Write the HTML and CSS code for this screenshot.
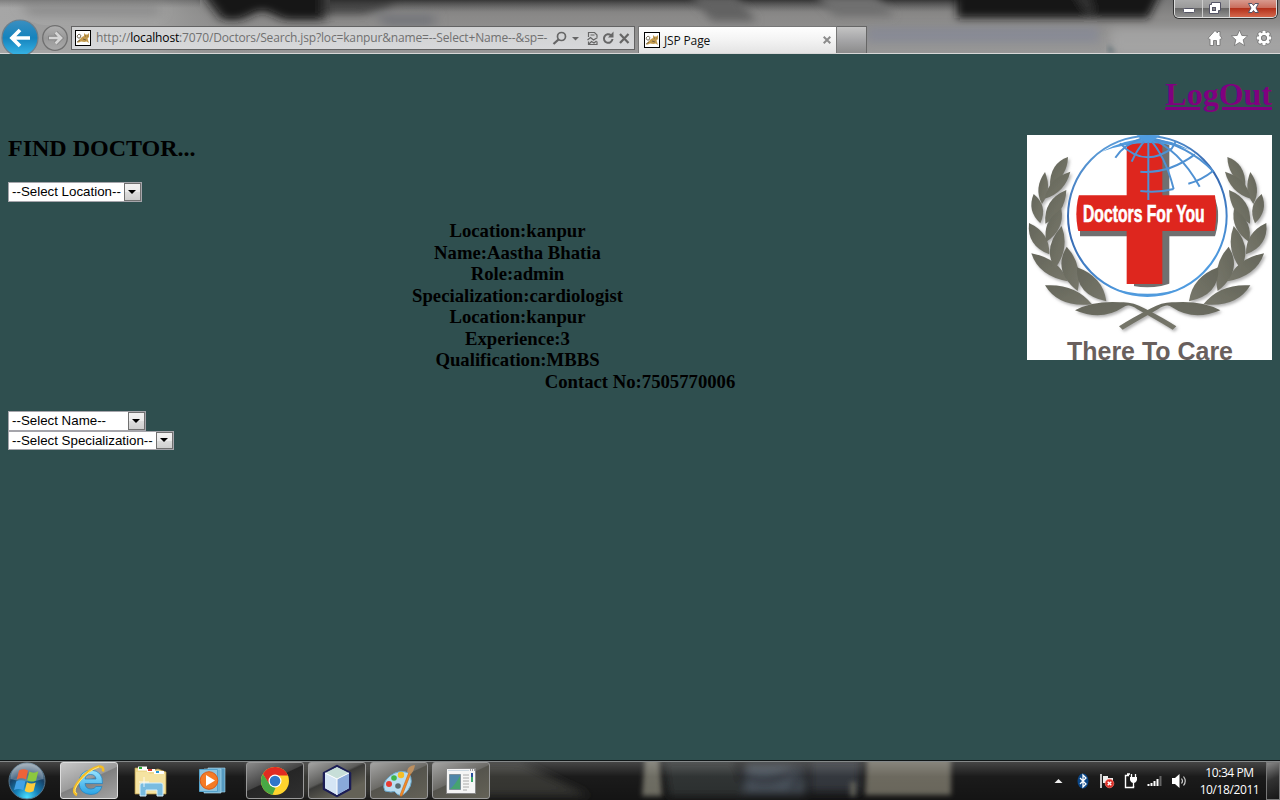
FILE: index.html
```html
<!DOCTYPE html>
<html lang="en">
<head>
<meta charset="utf-8">
<title>JSP Page</title>
<link rel="stylesheet" href="styles.css">
</head>
<body>
<svg class="defs" width="0" height="0" aria-hidden="true">
  <defs>
    <symbol id="cat" viewBox="0 0 16 16">
      <rect x=".5" y=".5" width="15" height="15" fill="#fff" stroke="#000"/>
      <path d="M2 12.500l2-2.500 3-3 2-1V3l1.500 1.500h2L14 3v4l-1.500 1.500L14 13l-2.500-1.500-2 .5L6 11.500l-2 1z" fill="#c39a4c"/>
      <path d="M2 6l2-2 2 1.500L5 8 3 8zM2 12l3-2M10 6h1M12.500 6h.5M8 9l3 1" fill="none" stroke="#5f563f" stroke-width=".8"/>
    </symbol>
  </defs>
</svg>
<header class="chrome">
  <svg class="glass" width="1280" height="54" viewBox="0 0 1280 54" preserveAspectRatio="none">
    <defs>
      <linearGradient id="gt" x1="0" y1="0" x2="0" y2="1"><stop offset="0" stop-color="#777"/><stop offset=".3" stop-color="#8a8988"/><stop offset="1" stop-color="#989898"/></linearGradient>
      <linearGradient id="gl" x1="0" y1="0" x2="1" y2="0"><stop offset="0" stop-color="#a6a6a6"/><stop offset=".6" stop-color="#a0a09f"/><stop offset="1" stop-color="#888" stop-opacity="0"/></linearGradient>
      <linearGradient id="gd" x1="0" y1="0" x2="0" y2="1"><stop offset="0" stop-color="#2c2c2c" stop-opacity=".85"/><stop offset="1" stop-color="#555" stop-opacity="0"/></linearGradient>
      <linearGradient id="gs" x1="0" y1="0" x2="0" y2="1"><stop offset="0" stop-color="#444" stop-opacity=".4"/><stop offset="1" stop-color="#555" stop-opacity="0"/></linearGradient>
      <filter id="b4" x="-20%" y="-80%" width="140%" height="260%"><feGaussianBlur stdDeviation="6 4"/></filter>
      <filter id="b3" x="-20%" y="-80%" width="140%" height="260%"><feGaussianBlur stdDeviation="4"/></filter>
      <filter id="b2" x="-20%" y="-60%" width="140%" height="220%"><feGaussianBlur stdDeviation="2.500"/></filter>
    </defs>
    <rect width="1280" height="54" fill="url(#gt)"/>
    <rect width="260" height="54" fill="url(#gl)"/>
    <g filter="url(#b4)">
      <path d="M198-12H325V20H285L262 10L240 20H222z" fill="#161616"/>
      <path d="M325-12H395L390 6L365 14H325z" fill="#454545"/>
      <path d="M375 14h60v12h-50z" fill="#74767a"/>
      <path d="M20 4h140v12H30z" fill="#8e8e8e"/>
    </g>
    <rect x="330" width="640" height="12" fill="url(#gd)"/>
    <rect width="200" height="8" fill="url(#gs)"/>
    <g filter="url(#b3)">
      <path d="M690-4h45l22 25h-45z" fill="#626262"/>
      <path d="M815-4h60l20 20h-60z" fill="#707070"/>
      <path d="M957-12h206l-15 30H957z" fill="#141414"/>
      <path d="M1070-12l16 0 10 26h-10z" fill="#303030"/>
    </g>
    <rect x="868" y="28" width="230" height="14" fill="#80859a" opacity=".55" filter="url(#b3)"/>
    <rect x="1110" y="28" width="190" height="26" fill="#adadad" opacity=".6" filter="url(#b4)"/>
    <path d="M1108 44l8 9h-8z" fill="#66757a" filter="url(#b2)"/>
  </svg>
  <div class="titlebar">
    <div class="winctl">
      <span class="wbtn w1"><svg width="29" height="17"><rect x="8.500" y="8.500" width="11" height="4" rx="1" fill="#fff" stroke="#556"/></svg></span>
      <span class="wbtn w2"><svg width="27" height="17"><path d="M8.500 2.500h9v8h-2v3h-9v-9h2z" fill="#fff" stroke="#556"/><rect x="9.500" y="7.500" width="3" height="3" fill="#888" stroke="#556"/></svg></span>
      <span class="wbtn w3"><svg width="46" height="17"><path d="M18.500 3.500h3.500l1.500 2 1.500-2h3.500l-2.500 4.500 2.500 4.500H25L23.500 10.500l-1.500 2h-3.500l2.500-4.500z" fill="#fff" stroke="#545466"/></svg></span>
    </div>
  </div>
  <div class="navrow">
    <svg class="arrows" width="72" height="35" viewBox="0 19 72 35">
      <defs>
        <linearGradient id="bk" x1="0" y1="0" x2="0" y2="1"><stop offset="0" stop-color="#3b8fc0"/><stop offset=".5" stop-color="#1583bd"/><stop offset="1" stop-color="#39b7e8"/></linearGradient>
        <linearGradient id="fw" x1="0" y1="0" x2="0" y2="1"><stop offset="0" stop-color="#b0b0b0"/><stop offset=".5" stop-color="#999"/><stop offset="1" stop-color="#aaa"/></linearGradient>
      </defs>
      <path d="M28 20q10 6 22 5v25H24z" fill="#999" opacity=".6"/>
      <circle cx="20" cy="38" r="18" fill="url(#bk)" stroke="#6f7f8a" stroke-width="1.200"/>
      <path d="M30 38H12M20 30L12 38L20 46" fill="none" stroke="#fff" stroke-width="3.700"/>
      <circle cx="55" cy="38" r="12.300" fill="url(#fw)" stroke="#707070" stroke-width="1.300"/>
      <path d="M48 38h12M55.500 32.500L61 38L55.500 43.500" fill="none" stroke="#858585" stroke-width="4.400"/>
      <path d="M49 38h11M55.500 32.500L61 38L55.500 43.500" fill="none" stroke="#d5d5d5" stroke-width="2.700"/>
    </svg>
    <div class="address">
      <svg width="16" height="16"><use href="#cat"/></svg>
      <span class="url">http://<b>localhost</b>:7070/Doctors/Search.jsp?loc=kanpur&amp;name=--Select+Name--&amp;sp=-</span>
      <svg class="tools" width="80" height="18" viewBox="551 29 80 18" fill="none" stroke="#666">
        <circle cx="560.500" cy="36.500" r="4" stroke-width="1.700"/><path d="M557.500 39.500L552.500 44" stroke-width="2.300"/>
        <path d="M571 37h7l-3.500 3.500z" fill="#666" stroke="none"/>
        <path d="M587.500 37v-4.500h6l2.500 2.500v2M587.500 41.500v3h8.500v-3M586.500 40l3-2.500 3 2.500 4-2.500M588 44l2.500-2.500 2.500 1.500 2.500-2M589.500 35h4" stroke-width="1.200"/>
        <path d="M610 35.200a4.300 4.300 0 1 0 1.500 3.800" stroke-width="2"/><path d="M612.500 31.500v6h-5.500z" fill="#666" stroke="none"/>
        <path d="M619 34l8.500 9M627.500 34l-8.500 9" stroke-width="2.200"/>
      </svg>
    </div>
    <div class="tab">
      <svg width="16" height="16"><use href="#cat"/></svg>
      <span class="tabname">JSP Page</span>
      <svg width="8" height="8"><path d="M.7.7l6.600 6.600M7.300.7L.7 7.300" stroke="#8c8c8c" stroke-width="2"/></svg>
    </div>
    <div class="newtab"></div>
    <svg class="icons" width="66" height="18" viewBox="1207 29 66 18" fill="#fff" stroke="#777" stroke-width=".9">
      <path d="M1215 30.500l2.500 2.500v-1.500h2.500v4l2 2.800-1 .9h-1V45.500h-3.500v-5h-3v5H1210v-6.300h-1l-1-.9z"/>
      <path d="M1239.500 30l2.300 5.400 5.900.5-4.500 3.900 1.400 5.900-5.100-3.200-5.100 3.200 1.400-5.900-4.500-3.900 5.900-.5z"/>
      <g><path d="M1264 30.200v15.600M1256.200 38h15.600M1258.500 32.500l11 11M1269.500 32.500l-11 11" stroke="#777" stroke-width="4.400"/><path d="M1264 30.800v14.400M1256.800 38h14.400M1259 33l10 10M1269 33l-10 10" stroke="#fff" stroke-width="3"/><circle cx="1264" cy="38" r="4.200" fill="#999" stroke="#fff" stroke-width="2.700"/><circle cx="1264" cy="38" r="2.600" fill="#aaa" stroke="#777"/></g>
    </svg>
  </div>
</header>

<main class="page">
  <h1><a href="#">LogOut</a></h1>
  <svg class="logo" width="245" height="225" viewBox="51 195 735 675">
    <defs>
      <linearGradient id="leaf" x1="0" y1="0" x2="1" y2="1"><stop offset="0" stop-color="#65665a"/><stop offset="1" stop-color="#77776b"/></linearGradient>
      <linearGradient id="ring" x1="0" y1="0" x2=".4" y2="1"><stop offset="0" stop-color="#67aee6"/><stop offset=".5" stop-color="#3565ad"/><stop offset="1" stop-color="#4f9be0"/></linearGradient>
      <clipPath id="globe"><ellipse cx="412" cy="433" rx="213" ry="219"/></clipPath>
      <filter id="sh" x="-10%" y="-10%" width="120%" height="120%"><feDropShadow dx="5" dy="6" stdDeviation="4" flood-color="#888" flood-opacity=".65"/></filter>
      <g id="branch" fill="url(#leaf)">
        <path d="M174 261Q118 280 120 349Q172 320 174 261z"/>
        <path d="M105 306Q70 355 96 402Q127 360 105 306z"/>
        <path d="M181 305Q114 325 104 386Q165 368 181 305z"/>
        <path d="M71 372Q50 422 91 460Q115 408 71 372z"/>
        <path d="M169 360Q100 388 106 461Q166 430 169 360z"/>
        <path d="M57 459Q50 528 118 553Q120 488 57 459z"/>
        <path d="M154 416Q95 455 109 515Q165 478 154 416z"/>
        <path d="M64 550Q86 618 173 634Q148 566 64 550z"/>
        <path d="M155 468Q96 534 135 596Q180 535 155 468z"/>
        <path d="M170 530Q126 602 203 663Q220 584 170 530z"/>
        <path d="M105 646Q146 714 246 703Q196 640 105 646z"/>
        <path d="M201 592Q196 675 289 694Q279 620 201 592z"/>
        <path d="M195 721Q250 692 330 697Q365 693 403 715Q460 744 499 769L488 779Q430 745 382 718Q355 699 340 712Q275 755 195 721z"/>
      </g>
    </defs>
    <rect x="51" y="195" width="735" height="675" fill="#fff"/>
    <g filter="url(#sh)"><use href="#branch"/><use href="#branch" transform="translate(826 0) scale(-1 1)"/></g>
    <g clip-path="url(#globe)">
      <path d="M370 206H478V378H612Q636 435 617 499H478V660H372V499H210V395H370z" fill="#707070"/>
      <path d="M350 206H457V376H615Q623 430 614 483H457V642H350V483H190V376H350z" fill="#de261e"/>
    </g>
    <ellipse cx="412" cy="438" rx="238" ry="240" fill="none" stroke="url(#ring)" stroke-width="6"/>
    <path d="M300 651Q412 705 525 651Q412 692 300 651zM275 245Q412 170 540 240Q412 196 275 245z" fill="#519bdd"/>
    <g fill="none" stroke="#4f91d3" stroke-width="6">
      <path d="M415 200V390M415 203Q465 255 491 357M415 203Q505 235 569 350M415 203Q535 225 610 304M410 205Q380 240 365 275M400 203Q340 225 316 263M330 220Q402 295 485 236L497 215M391 305Q475 312 555 253M391 363Q440 370 491 357M535 341Q575 330 610 302"/>
    </g>
    <path d="M380 196H450L425 216H403z" fill="#4f9ce0"/>
    <text x="219" y="457" font-family="Liberation Sans, sans-serif" font-weight="700" font-size="73" textLength="365" lengthAdjust="spacingAndGlyphs" fill="#fff" stroke="#fff" stroke-width="2">Doctors For You</text>
    <text x="171" y="869" font-family="Liberation Sans, sans-serif" font-weight="700" font-size="75" textLength="498" lengthAdjust="spacingAndGlyphs" fill="#695f5d">There To Care</text>
  </svg>
  <h2>FIND DOCTOR...</h2>
  <div class="select loc"><span>--Select Location--</span><i></i></div>
  <h3>Location:kanpur<br>Name:Aastha Bhatia<br>Role:admin<br>Specialization:cardiologist<br>Location:kanpur<br>Experience:3<br>Qualification:MBBS<br>Contact No:7505770006</h3>
  <div class="select name"><span>--Select Name--</span><i></i></div>
  <div class="select spec"><span>--Select Specialization--</span><i></i></div>
</main>

<footer class="taskbar">
  <svg class="glass" width="1280" height="40" viewBox="0 0 1280 40">
    <defs><linearGradient id="tg" x1="0" y1="0" x2="0" y2="1"><stop offset="0" stop-color="#fff" stop-opacity=".22"/><stop offset=".4" stop-color="#fff" stop-opacity=".03"/><stop offset="1" stop-color="#fff" stop-opacity="0"/></linearGradient></defs>
    <rect width="1280" height="40" fill="#141414"/>
    <g filter="url(#b3)">
      <path d="M250 2h270l70 34H250z" fill="#30302e"/>
      <path d="M664 0h70l10 36h-75z" fill="#2b2d2e"/>
      <path d="M745 4h60v30h-62z" fill="#454d56"/>
      <path d="M740 12q25 20 60-6M792 30l12-22" stroke="#252a30" stroke-width="6" fill="none"/>
      <path d="M810 0h50v32h-50z" fill="#2d3137"/>
    </g>
    <g filter="url(#b2)">
      <path d="M645-4h14l3 40h-20z" fill="#6b695f"/>
      <path d="M850 22h6v14h-6z" fill="#5c5b54"/>
      <path d="M867-4h84v39h-86z" fill="#68655a"/>
    </g>
    <rect y="1" width="1280" height="39" fill="url(#tg)"/>
    <path d="M0 .5h1280" stroke="#101617"/><path d="M0 1.500h1280" stroke="#85898a"/>
  </svg>
  <svg class="start" width="38" height="38" viewBox="0 0 38 38">
    <defs><radialGradient id="orb" cx=".5" cy=".95" r=".9"><stop offset="0" stop-color="#4be0ff"/><stop offset=".35" stop-color="#1683bb"/><stop offset=".7" stop-color="#174166"/><stop offset="1" stop-color="#8495a3"/></radialGradient></defs>
    <circle cx="19" cy="19" r="18" fill="url(#orb)" stroke="#55758b"/>
    <path d="M2.500 17a16.500 16.500 0 0 1 33 0Q19 22 2.500 17z" fill="#fff" opacity=".25"/>
    <path d="M11 8.500q4.500-2.500 9 0l-2 9q-4.500-2.400-9.300 0z" fill="#ee6338"/>
    <path d="M21.300 9.500q4.500 2.400 9-.3l-2.300 9.200q-4.500 2.500-8.800-.2z" fill="#8cc83f"/>
    <path d="M8.300 19.300q4.500-2.200 9.200 0l-2.200 8.900q-4.700-2.400-9.300-.2z" fill="#42a2e6"/>
    <path d="M18.900 20.200q4.500 2.500 8.800.2l-2.200 8.900q-4.500 2.400-8.800-.2z" fill="#fccb3c"/>
  </svg>
  <nav class="apps">
    <span class="app active"><svg width="36" height="34" viewBox="0 0 36 34"><defs><linearGradient id="ie" x1="0" y1="0" x2="0" y2="1"><stop offset="0" stop-color="#99e4ff"/><stop offset="1" stop-color="#2ba3e4"/></linearGradient></defs><path d="M31.500 19.500H14q.5 5.500 6 5.500 3.500 0 5-2.500h6Q28.500 30.500 20 30.500 8.500 30 8 19 8 7 20 6q12 1 11.500 13.500zM14 15h11q-.5-4.500-5.500-4.500T14 15z" fill="url(#ie)" stroke="#2380be" stroke-width=".7"/><path d="M6 31Q-.5 28 8 17 17 5 28 2.500q5-.5 4 5" fill="none" stroke="#f4bd22" stroke-width="2.600"/><path d="M5.500 29.500Q1 27 9 17 18 6 28 3" fill="none" stroke="#ffe683" stroke-width="1"/></svg></span>
    <span class="app flat"><svg width="34" height="32" viewBox="0 0 34 32"><path d="M1 3h11l2 3 10-2 8 3v22H1z" fill="#efd98c" stroke="#b79b52" stroke-width=".7"/><path d="M4 1.500h9v4H4zM13 4h8v3h-8zM20 6h10v3H20z" fill="#fff"/><path d="M5 2h3v2H5z" fill="#26ad34"/><path d="M14 4h4v2h-4z" fill="#d53c30"/><path d="M22 6h3v2h-3z" fill="#2798d4"/><path d="M2 7h12l2 2h15v19H2z" fill="#f5e3a1"/><path d="M6 31V20q0-2 2-2h19q2 0 2 2v11h-6v-6H12v6z" fill="#79bce0" stroke="#d6effb"/><path d="M10 12v10M5 17h10" stroke="#fff" opacity=".8"/></svg></span>
    <span class="app flat wmp"><svg width="28" height="28" viewBox="0 0 28 28"><path d="M10 1h17v24H10z" fill="#5599bf" stroke="#a8d8ee" stroke-width=".6"/><path d="M6 2h17v24H6z" fill="#71b4d5" stroke="#b9e1f2" stroke-width=".6"/><path d="M1.500 2.500h18v22h-18z" fill="#8fc4dd" stroke="#54a2cb"/><circle cx="11" cy="13.500" r="8.800" fill="#f47b25" stroke="#dc5b15"/><path d="M8 8l9 5.500L8 19z" fill="#fff"/></svg></span>
    <span class="app"><svg width="30" height="30" viewBox="0 0 30 30"><circle cx="15" cy="15" r="14" fill="#ffd42d"/><path d="M2.900 8A14 14 0 0 1 28 9.500H15L9 18z" fill="#e12b22"/><path d="M2.900 8L10 19l5.500 3-3 6.800A14 14 0 0 1 2.900 8z" fill="#48a845"/><circle cx="15" cy="15" r="6.500" fill="#fff"/><circle cx="15" cy="15" r="5.300" fill="#2f76c9"/></svg></span>
    <span class="app warm first"><svg width="32" height="34" viewBox="0 0 32 34"><path d="M16 2l13 7v16l-13 7-13-7V9z" fill="#eef5fb" stroke="#1b1d56" stroke-width="2.500" stroke-linejoin="round"/><path d="M16 3l12 6-12 6L4 9z" fill="#c7ded8"/><path d="M16 15l12-6v15l-12 7z" fill="#89a9d9"/><path d="M4 9l12 6v16L4 24z" fill="#d5e5f5"/><path d="M4 9l12 6 12-6M16 15v16" fill="none" stroke="#fff"/></svg></span>
    <span class="app warm"><svg width="34" height="34" viewBox="0 0 34 34"><path d="M3 27Q-1 19 8 12T27 9q5 9-1 17T15 30q-2-4-6-2z" fill="#b9ddf0" stroke="#6baace"/><circle cx="16" cy="22" r="2.800" fill="#596c70"/><circle cx="7" cy="20" r="3" fill="#e73b32"/><circle cx="12" cy="14" r="2.800" fill="#3eb54a"/><circle cx="19" cy="11" r="3.200" fill="#f5be26"/><path d="M27 8l2 1-9 23q-2 1-2-1z" fill="#f28b26" stroke="#b75d18" stroke-width=".5"/><path d="M25 8q0-6 8-7-1 6-4 9z" fill="#bd9060"/></svg></span>
    <span class="app warm"><svg width="30" height="26" viewBox="0 0 30 26"><path d="M.5.5h29v25H.5z" fill="#f5f5f5" stroke="#888"/><path d="M2 2h21v1H2z" fill="#ccd8e1"/><path d="M24 2h1M26 2h1M28 2h1" stroke="#444"/><path d="M3.500 6.500h11v15h-11z" fill="#4f86a8" stroke="#7c8e99"/><path d="M4 21Q9 17 14 8v13z" fill="#46a36e"/><path d="M17 7h6M17 10h6M17 13h6M17 16h6M17 19h6M17 22h4" stroke="#aaa"/><path d="M25 5h2v4h-2z" fill="#274e9a"/><path d="M25 9h2v5h-2z" fill="#3ca66b"/></svg></span>
  </nav>
  <svg class="tray" width="136" height="20" viewBox="1054 771 136 20">
    <path d="M1054.500 783l4-4 4 4z" fill="#eee"/>
    <ellipse cx="1083" cy="781" rx="5.500" ry="7.500" fill="#0c4787"/><path d="M1080 778l6 6-3 3v-12l3 3-6 6" fill="none" stroke="#fff" stroke-width="1.300"/>
    <path d="M1101 774v14" stroke="#fff" stroke-width="1.500"/><path d="M1103 776h5v2h5v7h-5v-2h-5z" fill="#eee"/><circle cx="1109.500" cy="783.500" r="4.300" fill="#d92c25" stroke="#ff7a70" stroke-width=".7"/><path d="M1107.700 781.700l3.600 3.600M1111.300 781.700l-3.600 3.600" stroke="#fff" stroke-width="1.400"/>
    <path d="M1129 775.500h-3.500v12h8v-1.500M1127 774h3" fill="none" stroke="#fff" stroke-width="1.400"/><path d="M1130 777h7v3q-1 3-3.500 3T1130 780z" fill="#fff"/><path d="M1131.500 774v4M1135.500 774v4M1133.500 782v5" stroke="#fff" stroke-width="1.300"/>
    <path d="M1148.500 786v-2M1151.500 786v-3M1154.500 786v-5M1157.500 786v-7" stroke="#fff" stroke-width="2"/><path d="M1160.500 786v-10" stroke="#666" stroke-width="2"/>
    <path d="M1172 778h3l4.500-4v14l-4.500-4h-3z" fill="#fff"/><path d="M1181.500 778.500q2 2.500 0 5M1183.500 776.500q3.500 4.500 0 9" fill="none" stroke="#ccc" stroke-width="1.200"/>
  </svg>
  <div class="clock"><span>10:34 PM</span><span>10/18/2011</span></div>
  <div class="peek"></div>
</footer>
</body>
</html>
```
FILE: styles.css
```css
* { box-sizing: border-box; }
body {
  margin: 0;
  width: 1280px;
  height: 800px;
  overflow: hidden;
  display: flex;
  flex-direction: column;
  background: #2f4f4f;
  font-family: "Open Sans", "Noto Sans", sans-serif;
}
svg { display: block; flex: none; }
.defs { position: absolute; }

/* browser frame */
.chrome {
  position: relative;
  height: 54px;
  flex: none;
  border-bottom: 1px solid #d8d8d8;
}
.glass { position: absolute; left: 0; top: 0; z-index: -1; }
.titlebar { height: 19px; display: flex; justify-content: flex-end; padding-right: 3px; }
.winctl {
  display: flex;
  height: 18px;
  border: 1px solid #ddd;
  border-top: 0;
  border-radius: 0 0 5px 5px;
  box-shadow: 0 0 0 1px #333;
  overflow: hidden;
}
.wbtn { border-right: 1px solid #ccc; background: linear-gradient(#aaa, #999 48%, #686868 50%, #929292); }
.w1 { width: 28px; }
.w2 { width: 27px; }
.w3 { width: 46px; border-right: 0; background: linear-gradient(#d89a8e, #c96b5a 48%, #b3311b 50%, #d4674c); }
.navrow { display: flex; height: 34px; align-items: flex-start; }
.arrows { margin-right: -1px; }
.address {
  margin-top: 7px;
  width: 564px;
  height: 24px;
  border: 1px solid #636363;
  background: linear-gradient(#d0d1d2, #d7d8da);
  display: flex;
  align-items: center;
  padding-left: 3px;
}
.url {
  width: 452px;
  margin: 0 4px 0 5px;
  font-size: 12px;
  line-height: 20px;
  letter-spacing: -.15px;
  color: #707070;
  white-space: nowrap;
}
.url b { font-weight: 400; color: #000; }
.tab {
  margin: 7px 0 0 3px;
  width: 199px;
  height: 27px;
  border: 1px solid #777;
  border-bottom: 0;
  background: linear-gradient(#fff, #f3f3f3 50%, #e4e4e4);
  display: flex;
  align-items: center;
  padding: 0 5px 0 5px;
}
.tabname { flex: 1; margin-left: 4px; font-size: 12px; letter-spacing: -.15px; color: #111; }
.newtab {
  margin-top: 7px;
  width: 30px;
  height: 27px;
  border: 1px solid #666;
  border-width: 1px 1px 0 0;
  background: linear-gradient(#c4c4c4, #a6a6a8 50%, #8b8b8b);
}
.icons { margin: 10px 7px 0 auto; }

/* document */
.page {
  flex: 1;
  padding: 0 8px;
  font-family: "Liberation Serif", serif;
  color: #000;
}
h1 { margin: 21px 0 22px; font-size: 32px; line-height: 38px; text-align: right; }
h1 a { color: #800080; }
.logo { float: right; }
h2 { margin: 0; font-size: 24px; line-height: 27px; }
h3 { margin: 18px 0 18px; font-size: 18.720px; line-height: 21.570px; text-align: center; }
.select {
  display: flex;
  height: 20px;
  border: 1px solid #a5a5ab;
  background: #fff;
  font: 13.333px/18px "Liberation Sans", sans-serif;
  white-space: nowrap;
}
.select span { flex: 1; padding-left: 3px; }
.select i {
  width: 17px;
  border: 1px solid #707070;
  background: linear-gradient(#f2f2f2, #ebebeb 50%, #ddd 50%, #cfcfcf);
  display: flex;
  align-items: center;
  justify-content: center;
  padding-right: 1px;
}
.select i::after { content: ""; border: 4px solid transparent; border-top-color: #000; border-bottom: 0; }
.loc { width: 134px; margin-top: 20px; }
.name { width: 138px; }
.spec { width: 166px; height: 19px; }

/* taskbar */
.taskbar {
  position: relative;
  z-index: 0;
  height: 40px;
  flex: none;
  display: flex;
  align-items: center;
  padding: 2px 0 0 8px;
}
.start { margin-right: 14px; }
.apps { display: flex; gap: 4px; height: 37px; align-self: flex-start; }
.app {
  width: 58px;
  border: 1px solid #999;
  border-radius: 3px;
  display: flex;
  align-items: center;
  justify-content: center;
  background: linear-gradient(155deg, #8b8b8b, #444 45%, #262626 47%, #303030);
}
.warm { background: linear-gradient(155deg, #a4a4a3, #6c6b67 45%, #55544d 47%, #646257); }
.first { background: linear-gradient(155deg, #a4a4a3, #5c5c5a 40%, #3a3a38 44%, #646257 75%); }
.active { border-color: #ddd; background: linear-gradient(155deg, #c8c8c8, #9b9b9b 48%, #808080 50%, #a4a4a4); }
.flat { border-color: transparent; background: none; }
.wmp { padding-right: 2px; }
.tray { margin-left: auto; margin-right: 9px; }
.clock {
  width: 61px;
  display: flex;
  flex-direction: column;
  align-items: center;
  font-size: 12px;
  line-height: 17px;
  letter-spacing: -.4px;
  color: #fff;
  white-space: nowrap;
}
.peek {
  width: 14px;
  height: 38px;
  margin-left: 6px;
  border: 1px solid #777;
  background: linear-gradient(155deg, #888, #333 45%, #161616);
}
```
